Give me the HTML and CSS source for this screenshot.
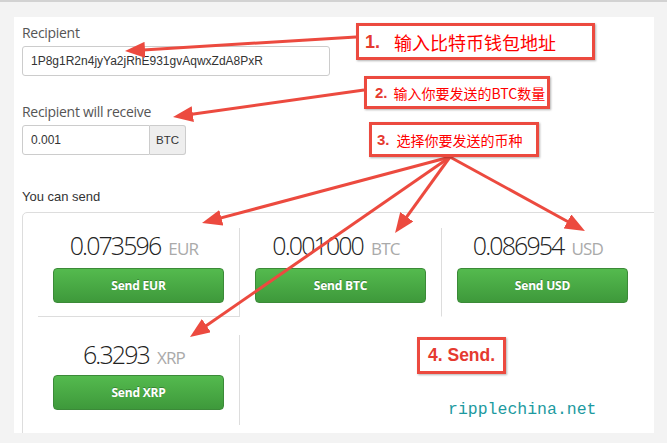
FILE: index.html
```html
<!DOCTYPE html>
<html lang="zh">
<head>
<meta charset="utf-8">
<title>Send</title>
<link rel="stylesheet" href="styles.css">
</head>
<body>
<main class="panel">
  <div class="field">
    <div class="label">Recipient</div>
    <div class="input addr">1P8g1R2n4jyYa2jRhE931gvAqwxZdA8PxR</div>
  </div>
  <div class="field">
    <div class="label">Recipient will receive</div>
    <div class="group">
      <div class="input">0.001</div>
      <span class="addon">BTC</span>
    </div>
  </div>
  <div class="section">You can send</div>
  <div class="card">
    <div class="grid">
      <div class="cell first">
        <div class="amount">0.073596<span class="unit">EUR</span></div>
        <div class="btn">Send EUR</div>
      </div>
      <div class="cell">
        <div class="amount">0.001000<span class="unit">BTC</span></div>
        <div class="btn">Send BTC</div>
      </div>
      <div class="cell last">
        <div class="amount">0.086954<span class="unit">USD</span></div>
        <div class="btn">Send USD</div>
      </div>
      <div class="cell r2">
        <div class="amount">6.3293<span class="unit">XRP</span></div>
        <div class="btn">Send XRP</div>
      </div>
    </div>
  </div>
</main>

<svg class="arrows" width="667" height="443" viewBox="0 0 667 443">
  <defs>
    <marker id="ah" viewBox="0 0 20 16" refX="10" refY="8" markerWidth="20" markerHeight="16" markerUnits="userSpaceOnUse" orient="auto">
      <path d="M0,0 L20,8 L0,16 z" fill="#ec4a3f"/>
    </marker>
  </defs>
  <g stroke="#ec4a3f" stroke-width="3" fill="none" marker-end="url(#ah)">
    <line x1="356" y1="37" x2="135" y2="50.4"/>
    <line x1="364" y1="90" x2="182.9" y2="115.6"/>
    <line x1="450" y1="157" x2="211.7" y2="220.4"/>
    <line x1="450" y1="157" x2="198.2" y2="331.3"/>
    <line x1="450" y1="157" x2="400.9" y2="224.9"/>
    <line x1="450" y1="157" x2="576.2" y2="226.2"/>
  </g>
</svg>

<div class="note n1"><span class="step big">1.</span><span class="cn c1">输入比特币钱包地址</span></div>
<div class="note n2"><span class="step">2.</span><span class="cn c2">输入你要发送的BTC数量</span></div>
<div class="note n3"><span class="step">3.</span><span class="cn c3">选择你要发送的币种</span></div>
<div class="note n4"><span class="step send">4. Send.</span></div>

<div class="wm">ripplechina.net</div>
</body>
</html>
```
FILE: styles.css
```css
* { box-sizing: border-box; }
html, body { margin: 0; }
body {
  position: relative;
  width: 667px;
  height: 443px;
  overflow: hidden;
  padding-top: 17px;
  background: linear-gradient(#d2d2d2, #d2d2d2) top left / 100% 2px no-repeat, #f3f3f3;
  font-family: "Open Sans", "Liberation Sans", sans-serif;
  color: #333;
}
.panel {
  margin-left: 14px;
  width: 640px;
  height: 416px;
  background: #fff;
  overflow: hidden;
  padding: 6px 0 0 8px;
}
.label {
  font-size: 14px;
  line-height: 20px;
  color: #555;
  letter-spacing: -0.3px;
  margin-bottom: 3px;
}
.field + .field { margin-top: 26px; }
.input {
  height: 30px;
  border: 1px solid #ccc;
  border-radius: 3px;
  font: 12px/28px "Liberation Sans", Arial, sans-serif;
  padding-left: 8px;
  color: #333;
}
.addr { width: 308px; }
.group { display: flex; width: 164px; }
.group .input { width: 128px; border-radius: 3px 0 0 3px; }
.addon {
  width: 36px;
  height: 30px;
  border: 1px solid #ccc;
  border-left: none;
  background: #eee;
  border-radius: 0 3px 3px 0;
  font: 11.5px/28px "Liberation Sans", Arial, sans-serif;
  text-align: center;
  color: #333;
}
.section {
  font: 13px/18px "Liberation Sans", Arial, sans-serif;
  color: #333;
  margin: 33px 0 6px;
}
.card {
  width: 660px;
  border: 1px solid #ddd;
  border-radius: 5px;
  padding: 15px;
}
.grid {
  display: grid;
  grid-template-columns: 202px 202px 202px;
  row-gap: 18px;
}
.cell {
  border-right: 1px solid #ddd;
  border-bottom: 1px solid transparent;
  padding: 1px 15px 13px;
}
.cell.first { border-bottom-color: #ddd; }
.cell.last { border-right-color: transparent; }
.cell.r2 { padding: 3px 15px 15px; border-bottom: none; }
.cell.r2 .amount { margin-bottom: 5px; }
.amount {
  font-weight: 300;
  font-size: 25px;
  line-height: 32px;
  height: 32px;
  letter-spacing: -1.9px;
  text-align: center;
  padding-right: 9px;
  margin-bottom: 7px;
  white-space: nowrap;
  color: #222;
}
.unit {
  font-size: 17px;
  line-height: 1;
  font-weight: 400;
  color: #aaa;
  letter-spacing: -0.8px;
  margin-left: 8px;
}
.btn {
  height: 35px;
  border: 1px solid #3b8a38;
  border-radius: 4px;
  background: linear-gradient(#54ba4e, #3e993b);
  color: #fff;
  font: 700 12px/33px "Open Sans", sans-serif;
  letter-spacing: -0.2px;
  text-align: center;
  text-shadow: 0 -1px 0 rgba(0, 0, 0, 0.25);
}
.arrows {
  position: absolute;
  left: 0;
  top: 0;
  pointer-events: none;
}
.note {
  position: absolute;
  display: flex;
  align-items: center;
  background: #fff;
  border: 3px solid #ec4a3f;
  box-shadow: 1px 1px 2px rgba(0, 0, 0, 0.3);
  white-space: nowrap;
}
.step {
  font: bold 15px/1 "Liberation Sans", Arial, sans-serif;
  color: #e53a30;
}
.step.big { font-size: 18px; }
.step.send { font-size: 17.5px; }
.cn {
  font-family: "Noto Sans CJK SC", sans-serif;
  color: #f00;
  line-height: 1;
}
.n1 { left: 356px; top: 23px; width: 239px; height: 37px; padding-left: 6px; }
.c1 { font-size: 18px; margin-left: 14px; }
.n2 { left: 364px; top: 76px; width: 186px; height: 33px; padding-left: 8px; }
.c2 { font-size: 14px; margin-left: 6px; }
.n3 { left: 369px; top: 122px; width: 170px; height: 35px; padding-left: 5px; }
.c3 { font-size: 14px; margin-left: 7px; }
.n4 { left: 417px; top: 337px; width: 89px; height: 37px; padding-left: 8px; }
.wm {
  position: absolute;
  left: 448px;
  top: 400px;
  font: 16.5px/20px "Liberation Mono", monospace;
  color: #1d9aa0;
}
```
